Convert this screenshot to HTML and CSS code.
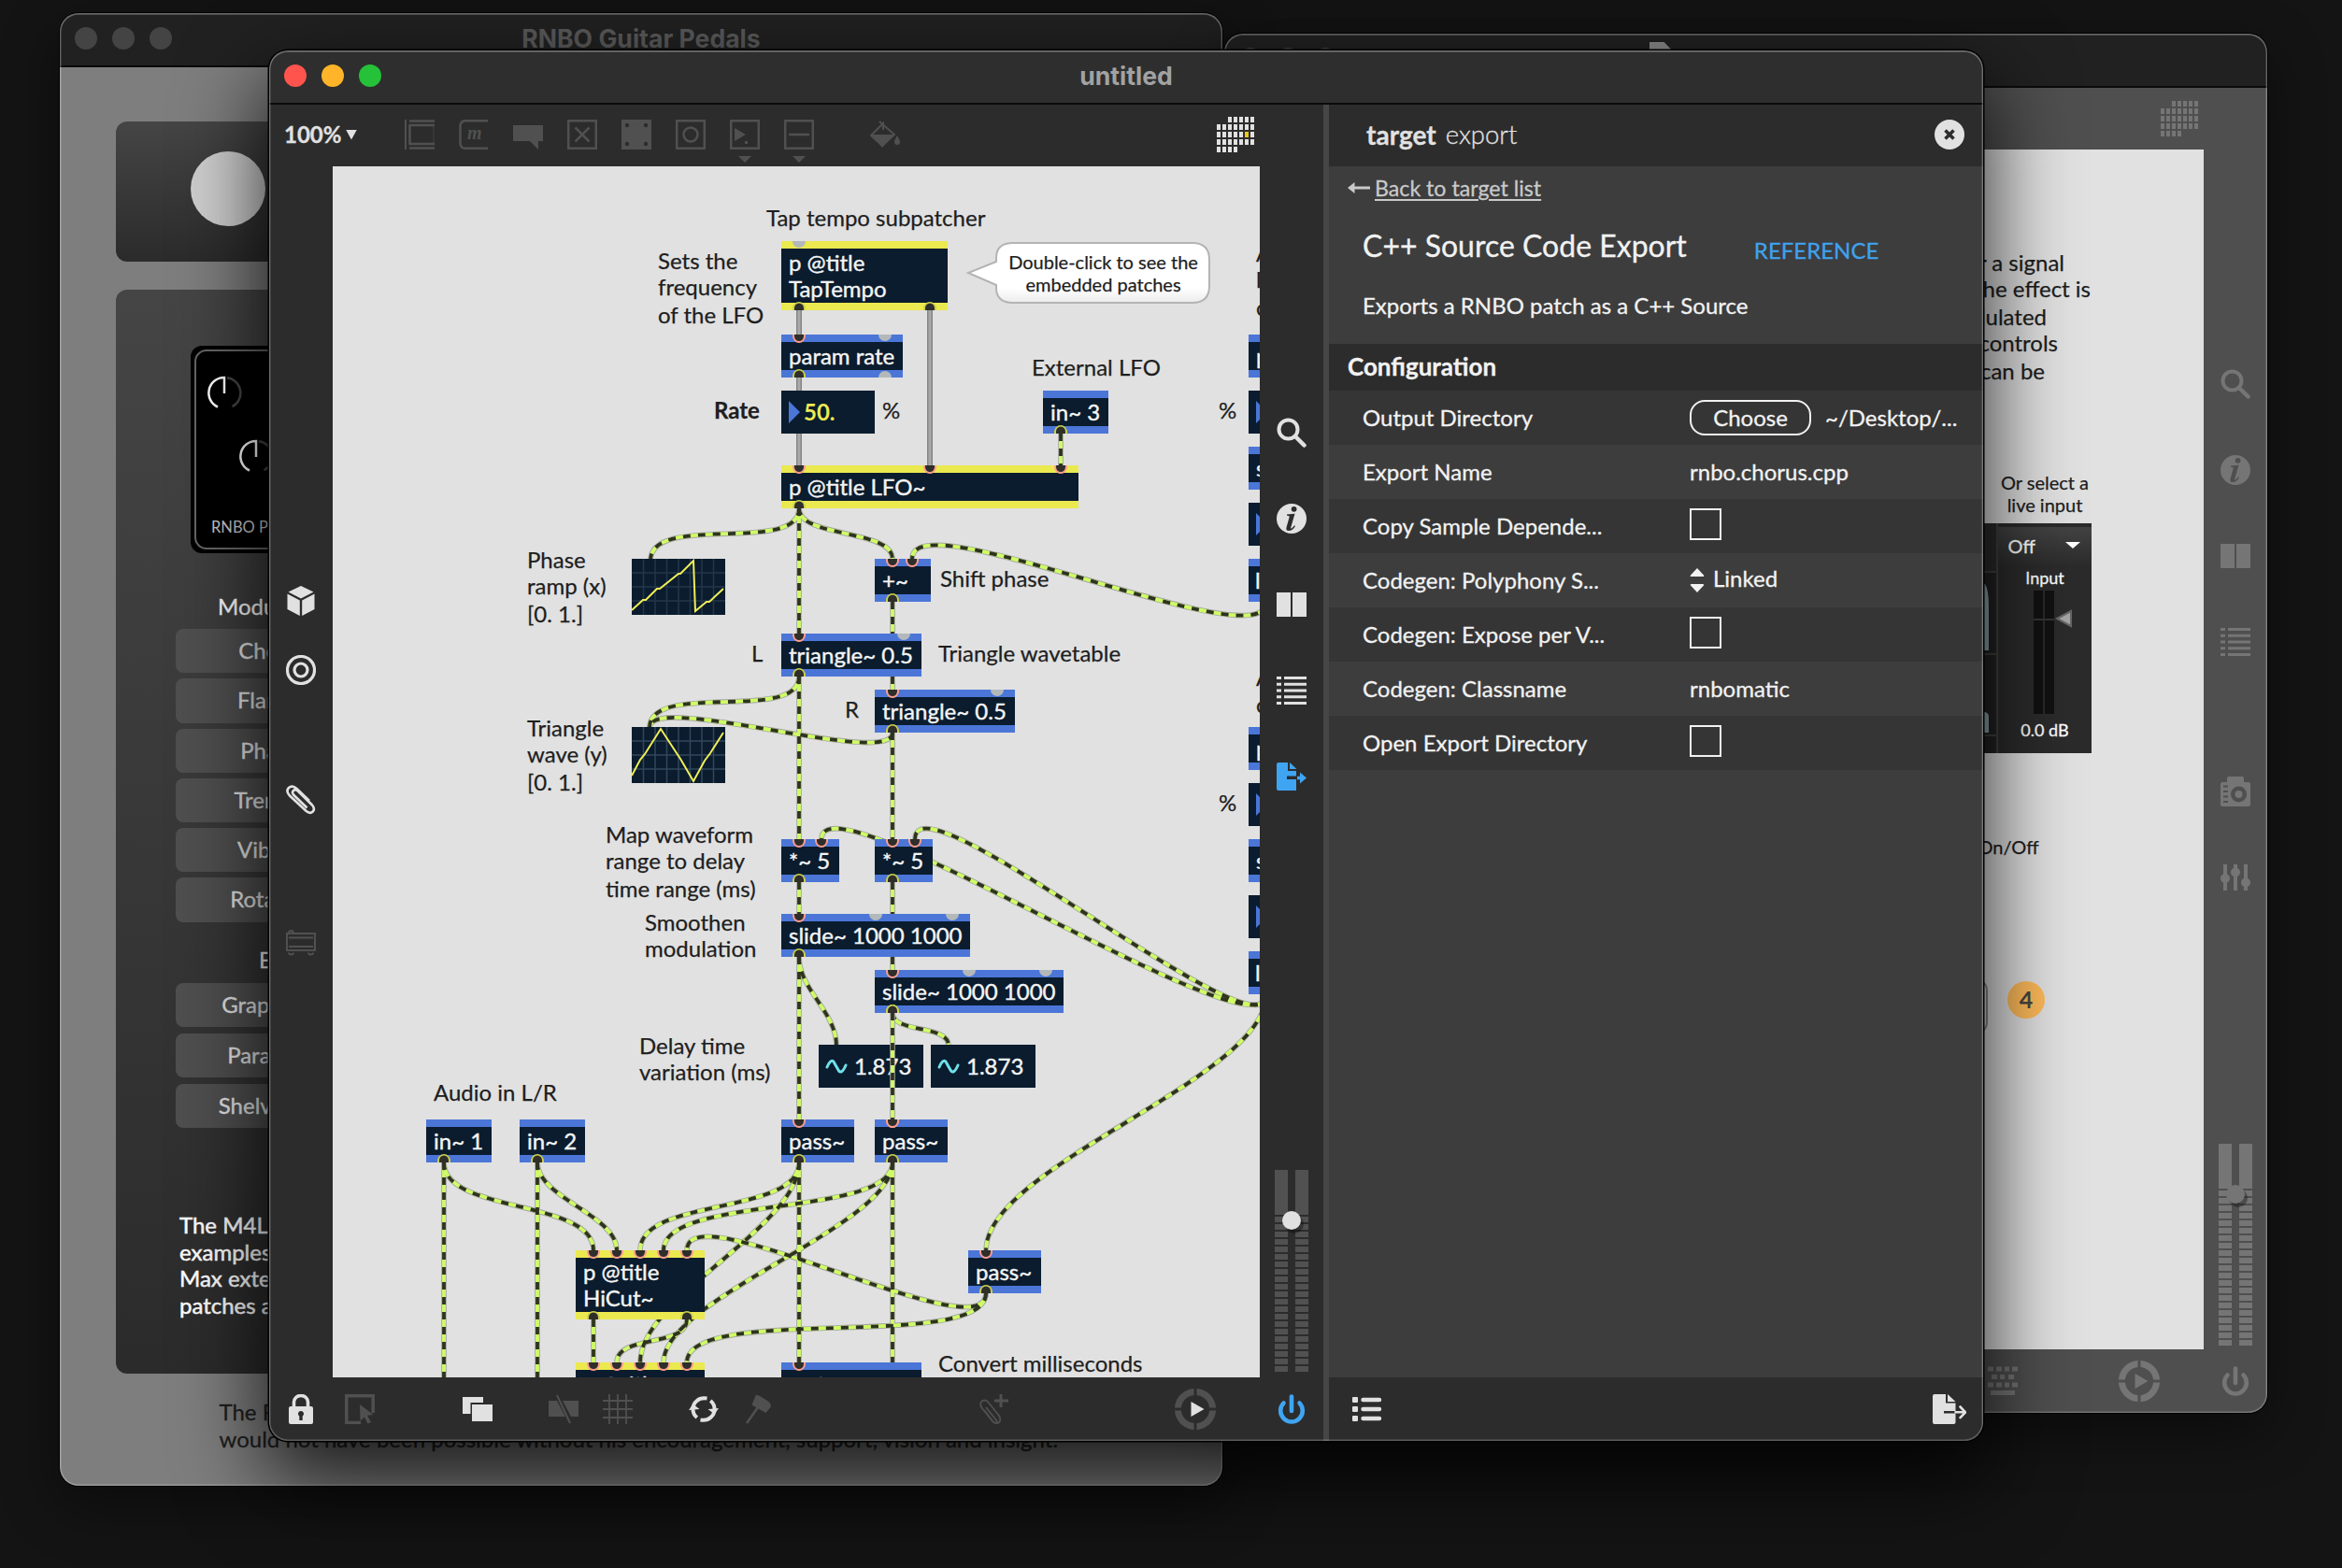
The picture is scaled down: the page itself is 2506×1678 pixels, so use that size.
FILE: index.html
```html
<!DOCTYPE html>
<html lang="en">
<head>
<meta charset="utf-8">
<title>untitled</title>
<link rel="stylesheet" href="styles.css">
</head>
<body>
<svg class="sprite" aria-hidden="true">
  <defs>
    <symbol id="i-search" viewBox="0 0 32 32"><circle cx="12.5" cy="12.5" r="10" fill="none" stroke="currentColor" stroke-width="4"/><path d="M20 20l9.5 9.5" stroke="currentColor" stroke-width="4.5" stroke-linecap="round"/></symbol>
    <symbol id="i-info" viewBox="0 0 32 32"><circle cx="16" cy="16" r="16" fill="currentColor"/><circle class="cut" cx="18.6" cy="5.8" r="2.9"/><path class="cut" d="M11 11.5l8.500-.8-4.200 14.600c-.3 1.100.1 1.500.8 1.100 1-.6 2-1.800 2.900-3.100l1 .7c-1.900 3.200-4.200 5-6.900 5-2.300 0-3.200-1.400-2.600-3.600l3.100-10.800c.3-1.200-.2-1.700-2.600-1.900z"/></symbol>
    <symbol id="i-book" viewBox="0 0 32 32"><path d="M0 3h15v26H0zM17 3h15v26H17z" fill="currentColor"/></symbol>
    <symbol id="i-list" viewBox="0 0 32 32"><path d="M0 2.500h5M8 2.500h24M0 9.200h5M8 9.200h24M0 16h5M8 16h24M0 22.800h5M8 22.800h24M0 29.500h5M8 29.500h24" stroke="currentColor" stroke-width="3" fill="none"/></symbol>
    <symbol id="i-export" viewBox="0 0 32 32"><path d="M2 1h10v9h9v5.500H11v3.500h10V31H2q-2 0-2-2V3q0-2 2-2z" fill="currentColor"/><path d="M14 1l7.500 7H14zM22 15.800h3v-4.300l7 6-7 6v-4.300h-3z" fill="currentColor"/></symbol>
    <symbol id="i-export-open" viewBox="0 0 36 32"><path d="M2 0h12v9.500h10.500V18H12v2.500h12.500V30q0 2-2 2H2q-2 0-2-2V2q0-2 2-2z" fill="currentColor"/><path d="M16 0l8.500 8H16z" fill="currentColor"/><path d="M24.500 19.300H35M29.500 13.500l5.500 5.800-5.500 5.800" fill="none" stroke="currentColor" stroke-width="2.600" stroke-linecap="round"/></symbol>
    <symbol id="i-power" viewBox="0 0 32 32"><path d="M7.500 9.500a11.800 11.800 0 1 0 17 0" fill="none" stroke="currentColor" stroke-width="4.600" stroke-linecap="round"/><path d="M16 2.500v15.500" stroke="currentColor" stroke-width="4.600" stroke-linecap="round"/></symbol>
    <symbol id="i-play" viewBox="0 0 44 44"><circle cx="22" cy="22" r="18.600" fill="none" stroke="currentColor" stroke-width="7"/><path class="cut-line" d="M22-1v11M22 34v11M-1 22h11M34 22h11"/><path class="play-tri" d="M17.500 14l14 8-14 8z"/></symbol>
    <symbol id="i-logo" viewBox="0 0 40 38">
      <path d="M12 3h28M0 11h40M0 19h40M0 27h40M0 35h22" fill="none" stroke="currentColor" stroke-width="6" stroke-dasharray="4 2"/>
      <path class="logo-dot" d="M30 16h4v6h-4z"/>
    </symbol>
    <g id="in"><path class="ring-in" d="M-7 0h14v1.500a7 7.500 0 0 1-14 0z"/><path class="hole" d="M-5 0h10v1.500a5 5.500 0 0 1-10 0z"/></g>
    <g id="out"><path class="ring-out" d="M-7 0h14v-1.500a7 7.500 0 0 0-14 0z"/><path class="hole" d="M-5 0h10v-2a5 5.500 0 0 0-10 0z"/></g>
    <path id="in-off" class="port-off" d="M-7 0h14a7 7 0 0 1-14 0z"/>
    <path id="out-off" class="port-off" d="M-7 0h14a7 7 0 0 0-14 0z"/>
  </defs>
</svg>

<div class="desktop">

  <!-- Guitar pedals overview window -->
  <section class="window win-pedals">
    <header class="titlebar"><span class="light"></span><span class="light"></span><span class="light"></span><h2>RNBO Guitar Pedals</h2></header>
    <div class="pedals-body">
      <div class="card card-head"><span class="disc"></span></div>
      <div class="card card-list">
        <div class="pedal">
          <svg width="200" height="222" viewBox="204 370 200 222">
            <rect x="209" y="375" width="190" height="212" rx="12" class="pedal-edge"/>
            <g class="dial"><path d="M233 435.500a16.500 16.500 0 0 1 7-31.500v17"/><path class="faint" d="M243 404.200a16.500 16.500 0 0 1 5.500 31"/></g>
            <g class="dial" transform="translate(34 68)"><path d="M233 435.500a16.500 16.500 0 0 1 7-31.500v17"/><path class="faint" d="M243 404.200a16.500 16.500 0 0 1 5.500 31"/></g>
            <text x="226" y="570">RNBO PEDALS</text>
          </svg>
        </div>
        <h3 class="group-name mod">Modulation</h3>
        <div class="btns">
          <span class="pbtn">Chorus</span><span class="pbtn">Flanger</span><span class="pbtn">Phaser</span><span class="pbtn">Tremolo</span><span class="pbtn">Vibrato</span><span class="pbtn wide">Rotating</span>
        </div>
        <h3 class="group-name eq">EQ</h3>
        <div class="btns eq-btns">
          <span class="pbtn">Graphic EQ</span><span class="pbtn">Parameter</span><span class="pbtn">Shelving EQ</span>
        </div>
        <p class="note">The M4L<br>examples<br>Max extern<br>patches are</p>
      </div>
      <p class="thanks">The RNBO Guitar Pedals<br>would not have been possible without his encouragement, support, vision and insight.</p>
    </div>
  </section>

  <!-- Chorus help window -->
  <section class="window win-help">
    <header class="titlebar"><span class="light"></span><span class="light"></span><span class="light"></span><i class="doc"></i></header>
    <div class="help-bar"><svg class="logo" width="40" height="38"><use href="#i-logo"/></svg></div>
    <div class="help-mid">
      <svg class="help-canvas" width="980" height="1284" viewBox="1378 160 980 1284">
        <g class="t" text-anchor="end">
          <text x="2209" y="290">for a signal</text><text x="2237" y="318">The effect is</text><text x="2190" y="348">modulated</text><text x="2202" y="376">controls</text><text x="2188" y="406">can be</text>
        </g>
        <g class="t small" text-anchor="middle"><text x="2188" y="524">Or select a</text><text x="2188" y="548">live input</text><text x="2149" y="914">On/Off</text></g>
        <defs><linearGradient id="hd" x2="0" y2="1"><stop stop-color="#434343"/><stop offset="1" stop-color="#2b2b2b"/></linearGradient></defs>
        <rect x="2000" y="560" width="238" height="246" fill="#2b2b2b"/>
        <rect x="2138" y="564" width="100" height="42" fill="url(#hd)"/>
        <rect x="2000" y="612" width="136" height="194" fill="#222"/>
        <path d="M2137 560v246M2000 612h136M2000 700h136M2000 787h136" stroke="#404040" stroke-width="2"/>
        <path d="M2100 696v-71h24q4 6 4 24v47zM2100 784v-22h24q4 1 4 5v17z" fill="#8fa5a9"/>
        <path d="M2210 580h16l-8 7z" fill="#fff"/>
        <path d="M2176 632h10v132h-10zM2188 632h10v132h-10z" fill="#111"/><path d="M2176 663h22" stroke="#333" stroke-width="2"/>
        <path d="M2201 662l15-8v16z" fill="#a5a5a5" stroke="#666" stroke-width="2"/>
        <g class="t tiny"><text x="2148.500" y="592" class="off">Off</text><text x="2188" y="625" text-anchor="middle">Input</text><text x="2188" y="788" text-anchor="middle">0.0 dB</text></g>
        <rect x="2020" y="1048" width="106" height="58" rx="12" fill="#e0e0e0" stroke="#8a8a8a" stroke-width="2"/>
        <circle cx="2168" cy="1070" r="20" fill="#ffbb5a"/>
        <text x="2168" y="1079" text-anchor="middle" class="num4">4</text>
      </svg>
      <aside class="rail rail-help">
        <svg width="32" height="32"><use href="#i-search"/></svg>
        <svg width="32" height="32"><use href="#i-info"/></svg>
        <svg width="32" height="32"><use href="#i-book"/></svg>
        <svg width="32" height="32"><use href="#i-list"/></svg>
        <svg class="camera" width="32" height="32" viewBox="0 0 32 32"><path d="M9 0h14q2 0 2 2v4h5q2 0 2 2v22q0 2-2 2H2q-2 0-2-2V8q0-2 2-2h5V2q0-2 2-2z" fill="currentColor"/><circle class="cut" cx="19.500" cy="19" r="8.500"/><circle cx="19.500" cy="19" r="4" fill="currentColor"/><path class="cut-thin" d="M3 10.500h5M3 16h5M3 21.500h5M3 27h5"/></svg>
        <svg width="32" height="32" viewBox="0 0 32 32"><path d="M5 2v28M16 2v28M27 2v28" stroke="currentColor" stroke-width="4"/><circle cx="5" cy="17" r="5" fill="currentColor"/><circle cx="16" cy="10.500" r="5" fill="currentColor"/><circle cx="27" cy="21.500" r="5" fill="currentColor"/></svg>
        <div class="meter"><i></i><i></i><b></b></div>
      </aside>
    </div>
    <div class="help-foot">
      <svg width="32" height="32" viewBox="0 0 32 32"><path d="M0 3h6M9 3h6M18 3h5M26 3h6M4 11.500h6M13 11.500h5M22 11.500h6M0 20h6M9 20h6M18 20h5M26 20h6M3 28.500h26" stroke="currentColor" stroke-width="5"/></svg>
      <svg class="play" width="44" height="44"><use href="#i-play"/></svg>
      <svg class="pow" width="32" height="32"><use href="#i-power"/></svg>
    </div>
  </section>

  <!-- Active patcher window -->
  <section class="window win-main">
    <header class="titlebar"><span class="light red"></span><span class="light amber"></span><span class="light green"></span><h1>untitled</h1></header>
    <div class="main-body">
      <div class="patcher">
        <div class="toolbar">
          <span class="zoom">100%</span><i class="zoom-arrow"></i>
          <div class="tools">
            <svg width="32" height="32" viewBox="0 0 32 32"><path d="M1 0v32" stroke-width="2"/><path d="M5 1.500h27M5 6h27M5 26h27M5 30.500h27M5.500 5v22" stroke-width="2.500"/><path d="M31 6v20" stroke-width=".6"/></svg>
            <svg width="32" height="32" viewBox="0 0 32 32"><path d="M31 1.200H6q-4 1-4.500 5v20q.5 4 4.500 4.600h25" stroke-width="2.500"/><text x="9" y="21" class="glyph-m">m</text></svg>
            <svg width="32" height="32" viewBox="0 0 32 32"><path d="M0 6h32v17h-5v9l-9-9H0z" class="solid"/></svg>
            <svg width="32" height="32" viewBox="0 0 32 32"><path d="M1.200 1.200h29.600v29.600H1.200z" stroke-width="2.500"/><path d="M8.500 8.500l15 15M23.500 8.500l-15 15" stroke-width="2.500"/></svg>
            <svg width="32" height="32" viewBox="0 0 32 32"><path d="M0 0h32v32H0z" class="solid"/><g class="cut"><circle cx="6" cy="6" r="2.200"/><circle cx="26" cy="6" r="2.200"/><circle cx="6" cy="26" r="2.200"/><circle cx="26" cy="26" r="2.200"/></g></svg>
            <svg width="32" height="32" viewBox="0 0 32 32"><path d="M1.200 1.200h29.600v29.600H1.200z" stroke-width="2.500"/><circle cx="16" cy="16" r="7.500" stroke-width="2.500"/></svg>
            <svg width="32" height="64" viewBox="0 -16 32 64"><path d="M1.200 1.200h29.600v29.600H1.200z" stroke-width="2.500"/><path d="M5 9l12 7-12 7zM16 23h3v3h-3zM9 39h14l-7 7z" class="solid"/></svg>
            <svg width="32" height="64" viewBox="0 -16 32 64"><path d="M1.200 1.200h29.600v29.600H1.200zM5 16h22" stroke-width="2.500"/><path d="M9 39h14l-7 7z" class="solid"/></svg>
            <svg class="bucket" width="32" height="32" viewBox="0 0 32 32"><path d="M10 2l16 14L13 28 1 17 14 4v7" stroke-width="2"/><path d="M1 16h25L13 30z" class="solid"/><path d="M29 17c2 4 3 5 3 7a3 3 0 0 1-6 0c0-2 1-3 3-7z" class="solid"/></svg>
          </div>
          <svg class="logo live" width="40" height="38"><use href="#i-logo"/></svg>
        </div>
        <div class="middle">
          <aside class="rail rail-left">
            <svg width="32" height="32" viewBox="0 0 32 32"><path d="M16 0l13.500 6.500L16 13.500 2.500 6.500zM1.500 8.500l13.300 7V32L1.500 25zM30.500 8.500l-13.300 7V32l13.300-7z" fill="currentColor"/></svg>
            <svg class="target" width="32" height="32" viewBox="0 0 32 32"><circle cx="16" cy="16" r="14.500"/><circle cx="16" cy="16" r="7"/></svg>
            <svg class="clip" width="32" height="32" viewBox="0 0 32 32"><path d="M22.500 24.500L8 10.500q-2-2.500 0-4.500 2.200-1.800 4.500.3L28 21.500q3.500 4 .7 7-3 2.800-7-.5L4 11.500Q-.6 6.500 3 3q3.800-3.300 8.500 1L25 17"/></svg>
            <svg class="amp" width="32" height="32" viewBox="0 0 32 32"><path d="M1 6h30v18H1zM3 10.500h26M3 20h26"/><path d="M3 5.500a2.500 2.500 0 0 1 5 0M3 26.500a2.500 2 0 0 0 5 0M24 26.500a2.500 2 0 0 0 5 0"/></svg>
          </aside>

          <svg class="patch" width="992" height="1296" viewBox="356 178 992 1296">
            <defs>
              <g id="cords">
                <path d="M855 544C855 594 696 548 696 600"/>
                <path d="M855 544V678"/>
                <path d="M855 544C855 576 955 566 955 598"/>
                <path d="M1355 644C1355 709 976 533 976 598"/>
                <path d="M955 644V738"/>
                <path d="M855 724C855 774 695 728 695 779"/>
                <path d="M955 784C955 823 695 739 695 779"/>
                <path d="M855 724V898"/>
                <path d="M955 784V898"/>
                <path d="M855 944V978"/>
                <path d="M955 944V1038"/>
                <path d="M855 1024V1198"/>
                <path d="M855 1024C855 1059 895 1083 895 1119"/>
                <path d="M955 1084C955 1106 1015 1096 1015 1119"/>
                <path d="M1355 1064C1355 1138 879 824 879 898"/>
                <path d="M1355 1064C1355 1138 979 824 979 898"/>
                <path d="M1355 1064C1355 1154 1055 1248 1055 1338"/>
                <path d="M475 1244V1474M575 1244V1474"/>
                <path d="M475 1244C475 1299 635 1283 635 1338"/>
                <path d="M575 1244C575 1282 660 1300 660 1338"/>
                <path d="M855 1244C855 1301 685 1281 685 1338"/>
                <path d="M955 1244C955 1304 710 1278 710 1338"/>
                <path d="M855 1244C855 1314 685 1388 685 1458"/>
                <path d="M955 1244C955 1313 710 1389 710 1458"/>
                <path d="M635 1412V1458"/>
                <path d="M735 1412C735 1442 660 1428 660 1458"/>
                <path d="M855 1244V1458"/>
                <path d="M955 1244V1458"/>
                <path d="M1055 1384C1055 1449 735 1273 735 1338"/>
                <path d="M1055 1384C1055 1448 735 1394 735 1458"/>
                <path d="M1135 464V498"/>
              </g>
              <path id="cord-top" d="M955 1084V1198"/>
              <path id="plain" d="M855 332V358M995 332V498M855 404V418M855 464V498"/>
              <linearGradient id="bub" x2="0" y2="1"><stop offset=".75" stop-color="#fff"/><stop offset="1" stop-color="#ececec"/></linearGradient>
            </defs>
            <use href="#plain" class="plain-edge"/><use href="#plain" class="plain-core"/>
            <use href="#cords" class="cord-edge"/><use href="#cords" class="cord-core"/><use href="#cords" class="cord-dash"/>

            <!-- object bodies -->
            <g class="sub">
              <rect x="836" y="258" width="178" height="74"/><rect x="836" y="498" width="318" height="46"/><rect x="616" y="1338" width="138" height="74"/><rect x="616" y="1458" width="138" height="74"/>
            </g>
            <g class="obj">
              <rect x="836" y="358" width="130" height="46"/><rect x="1116" y="418" width="70" height="46"/><rect x="936" y="598" width="60" height="46"/><rect x="836" y="678" width="150" height="46"/><rect x="936" y="738" width="150" height="46"/><rect x="836" y="898" width="62" height="46"/><rect x="936" y="898" width="62" height="46"/><rect x="836" y="978" width="202" height="46"/><rect x="936" y="1038" width="202" height="46"/><rect x="456" y="1198" width="70" height="46"/><rect x="556" y="1198" width="70" height="46"/><rect x="836" y="1198" width="78" height="46"/><rect x="936" y="1198" width="78" height="46"/><rect x="1036" y="1338" width="78" height="46"/><rect x="836" y="1458" width="150" height="46"/>
              <rect x="1336" y="358" width="90" height="46"/><rect x="1336" y="478" width="90" height="46"/><rect x="1336" y="598" width="90" height="46"/><rect x="1336" y="778" width="90" height="46"/><rect x="1336" y="898" width="90" height="46"/><rect x="1336" y="1018" width="90" height="46"/>
            </g>
            <g class="core">
              <rect x="836" y="266" width="178" height="58"/><rect x="836" y="506" width="318" height="30"/><rect x="616" y="1346" width="138" height="58"/><rect x="616" y="1466" width="138" height="58"/>
              <rect x="836" y="366" width="130" height="30"/><rect x="1116" y="426" width="70" height="30"/><rect x="936" y="606" width="60" height="30"/><rect x="836" y="686" width="150" height="30"/><rect x="936" y="746" width="150" height="30"/><rect x="836" y="906" width="62" height="30"/><rect x="936" y="906" width="62" height="30"/><rect x="836" y="986" width="202" height="30"/><rect x="936" y="1046" width="202" height="30"/><rect x="456" y="1206" width="70" height="30"/><rect x="556" y="1206" width="70" height="30"/><rect x="836" y="1206" width="78" height="30"/><rect x="936" y="1206" width="78" height="30"/><rect x="1036" y="1346" width="78" height="30"/><rect x="836" y="1466" width="150" height="30"/>
              <rect x="1336" y="366" width="90" height="30"/><rect x="1336" y="486" width="90" height="30"/><rect x="1336" y="606" width="90" height="30"/><rect x="1336" y="786" width="90" height="30"/><rect x="1336" y="906" width="90" height="30"/><rect x="1336" y="1026" width="90" height="30"/>
              <rect x="836" y="418" width="100" height="46"/><rect x="876" y="1118" width="112" height="46"/><rect x="996" y="1118" width="112" height="46"/>
              <rect x="1336" y="418" width="90" height="46"/><rect x="1336" y="538" width="90" height="46"/><rect x="1336" y="838" width="90" height="46"/><rect x="1336" y="958" width="90" height="46"/>
              <rect x="676" y="598" width="100" height="60"/><rect x="676" y="778" width="100" height="60"/>
            </g>
            <path class="numtri" d="M844 429v24l12-12zM1344 429v24l12-12zM1344 549v24l12-12zM1344 849v24l12-12zM1344 969v24l12-12z"/>

            <!-- scopes -->
            <path class="grid" d="M688.500 598v60M701 598v60M713.500 598v60M726 598v60M738.500 598v60M751 598v60M763.500 598v60M676 613h100M676 628h100M676 643h100"/>
            <path class="grid bright" d="M688.500 778v60M701 778v60M713.500 778v60M726 778v60M738.500 778v60M751 778v60M763.500 778v60M676 793h100M676 808h100M676 823h100"/>
            <path class="trace" d="M676 653l12-11h3l12-12h3l20-16h2l14-14 2 54 12-10h3l15-14"/>
            <path class="trace" d="M676 830l9-17 5-6 17-27 17 26 4 6 14 24 12-22 6-8 14-22"/>

            <!-- ports -->
            <use href="#in-off" x="855" y="258"/><use href="#in-off" x="947" y="358"/><use href="#out-off" x="947" y="404"/><use href="#in-off" x="967" y="678"/><use href="#in-off" x="1067" y="738"/><use href="#in-off" x="937" y="978"/><use href="#in-off" x="1019" y="978"/><use href="#in-off" x="1037" y="1038"/><use href="#in-off" x="1119" y="1038"/>
            <use href="#in" x="855" y="358"/><use href="#in" x="855" y="498"/><use href="#in" x="995" y="498"/><use href="#in" x="1135" y="498"/><use href="#in" x="955" y="598"/><use href="#in" x="976" y="598"/><use href="#in" x="855" y="678"/><use href="#in" x="955" y="738"/><use href="#in" x="855" y="898"/><use href="#in" x="879" y="898"/><use href="#in" x="955" y="898"/><use href="#in" x="979" y="898"/><use href="#in" x="855" y="978"/><use href="#in" x="955" y="1038"/><use href="#in" x="855" y="1198"/><use href="#in" x="955" y="1198"/><use href="#in" x="1055" y="1338"/><use href="#in" x="855" y="1458"/>
            <use href="#in" x="635" y="1338"/><use href="#in" x="660" y="1338"/><use href="#in" x="685" y="1338"/><use href="#in" x="710" y="1338"/><use href="#in" x="735" y="1338"/>
            <use href="#in" x="635" y="1458"/><use href="#in" x="660" y="1458"/><use href="#in" x="685" y="1458"/><use href="#in" x="710" y="1458"/><use href="#in" x="735" y="1458"/>
            <use href="#out" x="855" y="332"/><use href="#out" x="995" y="332"/><use href="#out" x="855" y="404"/><use href="#out" x="1135" y="464"/><use href="#out" x="855" y="544"/><use href="#out" x="955" y="644"/><use href="#out" x="855" y="724"/><use href="#out" x="955" y="784"/><use href="#out" x="855" y="944"/><use href="#out" x="955" y="944"/><use href="#out" x="855" y="1024"/><use href="#out" x="955" y="1084"/><use href="#out" x="475" y="1244"/><use href="#out" x="575" y="1244"/><use href="#out" x="855" y="1244"/><use href="#out" x="955" y="1244"/><use href="#out" x="1055" y="1384"/><use href="#out" x="635" y="1412"/><use href="#out" x="735" y="1412"/>

            <!-- object text -->
            <g class="t white">
              <text x="844" y="290">p @title</text><text x="844" y="318">TapTempo</text><text x="844" y="390">param rate</text><text x="1124" y="450">in~ 3</text><text x="844" y="530">p @title LFO~</text><text x="944" y="630">+~</text>
              <text x="844" y="710">triangle~ 0.5</text><text x="944" y="770">triangle~ 0.5</text><text x="844" y="930">*~ 5</text><text x="944" y="930">*~ 5</text><text x="844" y="1010">slide~ 1000 1000</text><text x="944" y="1070">slide~ 1000 1000</text>
              <text x="914" y="1150">1.873</text><text x="1034" y="1150">1.873</text><text x="464" y="1230">in~ 1</text><text x="564" y="1230">in~ 2</text><text x="844" y="1230">pass~</text><text x="944" y="1230">pass~</text><text x="1044" y="1370">pass~</text>
              <text x="624" y="1370">p @title</text><text x="624" y="1398">HiCut~</text><text x="624" y="1490">p @title</text><text x="844" y="1490">mstosamps~</text>
              <text x="1344" y="390">p</text><text x="1344" y="510">s</text><text x="1343" y="630">l</text><text x="1344" y="810">p</text><text x="1344" y="930">s</text><text x="1343" y="1050">l</text>
            </g>
            <text x="860" y="450" class="t value">50.</text>
            <path class="sig" d="M885 1142c3-7 6-9 8-4l4 7c2 4 5 2 8-5M1005 1142c3-7 6-9 8-4l4 7c2 4 5 2 8-5"/>
            <use href="#cord-top" class="cord-edge"/><use href="#cord-top" class="cord-core"/><use href="#cord-top" class="cord-dash"/>
            <use href="#in" x="955" y="1198"/><use href="#out" x="955" y="1084"/>

            <!-- comments -->
            <g class="t">
              <text x="820" y="242">Tap tempo subpatcher</text>
              <text x="704" y="288">Sets the</text><text x="704" y="316">frequency</text><text x="704" y="346">of the LFO</text>
              <text x="764" y="448" class="bold">Rate</text><text x="944" y="448">%</text><text x="1304" y="448">%</text><text x="1304" y="868">%</text>
              <text x="1104" y="402">External LFO</text>
              <text x="564" y="608">Phase</text><text x="564" y="636">ramp (x)</text><text x="564" y="666">[0. 1.]</text>
              <text x="1006" y="628">Shift phase</text><text x="804" y="708">L</text><text x="1004" y="708">Triangle wavetable</text><text x="904" y="768">R</text>
              <text x="564" y="788">Triangle</text><text x="564" y="816">wave (y)</text><text x="564" y="846">[0. 1.]</text>
              <text x="648" y="902">Map waveform</text><text x="648" y="930">range to delay</text><text x="648" y="960">time range (ms)</text>
              <text x="690" y="996">Smoothen</text><text x="690" y="1024">modulation</text>
              <text x="684" y="1128">Delay time</text><text x="684" y="1156">variation (ms)</text>
              <text x="464" y="1178">Audio in L/R</text><text x="1004" y="1468">Convert milliseconds</text>
              <text x="1344" y="280">A</text><text x="1344" y="308">l</text><text x="1344" y="338">c</text><text x="1344" y="734">A</text><text x="1344" y="763">c</text>
            </g>
            <path class="bubble" d="M1084 260h192q18 0 18 18v28q0 18-18 18h-192q-18 0-18-16v-3l-30-13 30-12v-4q0-16 18-16z"/>
            <g class="t bub-text" text-anchor="middle"><text x="1180.500" y="288">Double-click to see the</text><text x="1180.500" y="312">embedded patches</text></g>
          </svg>

          <aside class="rail rail-right">
            <svg width="32" height="32"><use href="#i-search"/></svg>
            <svg width="32" height="32"><use href="#i-info"/></svg>
            <svg width="32" height="32"><use href="#i-book"/></svg>
            <svg width="32" height="32"><use href="#i-list"/></svg>
            <svg class="blue" width="32" height="32"><use href="#i-export"/></svg>
            <div class="meter"><i></i><i></i><b></b></div>
          </aside>
        </div>
        <div class="footbar">
          <svg width="32" height="32" viewBox="0 0 32 32"><path d="M3 15q0-2 2-2h22q2 0 2 2v15q0 2-2 2H5q-2 0-2-2z" fill="currentColor"/><path d="M8.500 14V8.500a7.500 7 0 0 1 15 0V14" fill="none" stroke="currentColor" stroke-width="3.600"/><path class="cut" d="M16 18a3 3 0 0 1 1.700 5.500V28h-3.400v-4.500A3 3 0 0 1 16 18z"/></svg>
          <svg class="dim m31" width="32" height="32" viewBox="0 0 32 32"><path d="M17 30.500H1.800V1.800h28.400V20" fill="none" stroke="currentColor" stroke-width="3.500"/><path d="M16 11l14.500 11-6.500.8 4 7.200-3.500 1.500-3.500-7-4.500 4z" fill="currentColor"/></svg>
          <svg class="m94" width="32" height="32" viewBox="0 0 32 32"><path d="M0 3h22v6H8.500v12H0z" fill="currentColor"/><path d="M10 11h22v18H10z" fill="currentColor"/></svg>
          <svg class="dim m60" width="32" height="32" viewBox="0 0 32 32"><path d="M0 7h9l9 17H0zM15 7h17v17h-8z" fill="currentColor"/><path d="M9 1l14 30" stroke="currentColor" stroke-width="2"/></svg>
          <svg class="dim m26" width="32" height="32" viewBox="0 0 32 32"><path d="M7 0v32M16 0v32M25 0v32M0 7h32M0 16h32M0 25h32" stroke="currentColor" stroke-width="1.800"/></svg>
          <svg class="m60" width="32" height="32" viewBox="0 0 32 32"><path d="M8.800 25A11.500 11.500 0 0 1 8.800 7Q12.500 3.500 19.500 4.500M23.200 7A11.500 11.500 0 0 1 23.200 25Q19.500 28.500 12.500 27.500" fill="none" stroke="currentColor" stroke-width="4"/><path d="M32 15l-4.500 6.500-7-5.500zM0 17l4.500-6.500 7 5.500z" fill="currentColor"/></svg>
          <svg class="dim m26" width="32" height="32" viewBox="0 0 32 32"><path d="M14 .5l4 1.500 9 5.500c2 1.500 3.500 5 2.500 6.500l-5 6-15-8.500z" fill="currentColor"/><path d="M16 14L4 31" stroke="currentColor" stroke-width="2.600"/></svg>
          <svg class="dim m220" width="32" height="32" viewBox="0 0 32 32"><path d="M24 0v14M17 7h15" stroke="currentColor" stroke-width="3"/><path d="M8 14l10.500 13q2 2 .5 3.500-2 1-3.500-1L3.500 14.500Q.5 9.500 4 7.200q4-2 7 2L22 23q2.500 4.500.2 7-3.500 3-7.200-1.500L6.500 17.500" fill="none" stroke="currentColor" stroke-width="1.800"/></svg>
          <svg class="dim play m178" width="44" height="44"><use href="#i-play"/></svg>
          <svg class="blue m65" width="32" height="32"><use href="#i-power"/></svg>
        </div>
      </div>

      <div class="inspector">
        <div class="insp-head"><strong>target</strong><span>export</span>
          <svg width="32" height="32" viewBox="0 0 32 32"><circle cx="16" cy="16" r="16" fill="#e1e1e1"/><path d="M11.500 11.500l9 9M20.500 11.500l-9 9" stroke="#2c2c2c" stroke-width="3.600"/></svg>
        </div>
        <div class="insp-intro">
          <a class="back"><svg width="24" height="14" viewBox="0 0 24 14"><path d="M0 7l7.500-6v4.600H24v2.800H7.500V13z" fill="currentColor"/></svg><u>Back to target list</u></a>
          <div class="head-row"><h2>C++ Source Code Export</h2><a>REFERENCE</a></div>
          <p>Exports a RNBO patch as a C++ Source</p>
        </div>
        <h3>Configuration</h3>
        <ul class="rows">
          <li><label>Output Directory</label><button>Choose</button><span>~/Desktop/...</span></li>
          <li><label>Export Name</label><span>rnbo.chorus.cpp</span></li>
          <li><label>Copy Sample Depende...</label><i class="box"></i></li>
          <li><label>Codegen: Polyphony S...</label><svg width="16" height="26" viewBox="0 0 16 26"><path d="M8 0l7 7.500q1 1.500-1 1.500H2Q0 9 1 7.500zM8 26l7-7.500q1-1.500-1-1.500H2q-2 0-1 1.500z" fill="#f2f2f2"/></svg><span class="linked">Linked</span></li>
          <li><label>Codegen: Expose per V...</label><i class="box"></i></li>
          <li><label>Codegen: Classname</label><span>rnbomatic</span></li>
          <li><label>Open Export Directory</label><i class="box"></i></li>
        </ul>
        <div class="insp-foot">
          <svg width="32" height="26" viewBox="0 0 32 26"><path d="M0 1q0-1 1-1h4q1 0 1 1v4q0 1-1 1H1q-1 0-1-1zM0 11q0-1 1-1h4q1 0 1 1v4q0 1-1 1H1q-1 0-1-1zM0 21q0-1 1-1h4q1 0 1 1v4q0 1-1 1H1q-1 0-1-1z" fill="currentColor"/><path d="M11.500 3H29M11.500 13H29M11.500 23H29" stroke="currentColor" stroke-width="4.400" stroke-linecap="round"/></svg>
          <svg width="36" height="32"><use href="#i-export-open"/></svg>
        </div>
      </div>
    </div>
  </section>
</div>
</body>
</html>
```
FILE: styles.css
```css
* { box-sizing: border-box; }
body { margin: 0; background: #141414; }
h1, h2, h3, p, ul { margin: 0; padding: 0; font-weight: inherit; font-size: inherit; }
.sprite { position: absolute; width: 0; height: 0; }
.desktop {
  position: relative; width: 2506px; height: 1678px; overflow: hidden; background: #141414;
  font-family: Lato, "Liberation Sans", sans-serif; font-size: 24px; line-height: 28.8px;
  -webkit-text-stroke: .3px;
}
svg { display: block; flex: none; }

/* windows */
.window {
  position: absolute; display: flex; flex-direction: column; overflow: hidden; border-radius: 20px;
  box-shadow: 0 0 0 1px #000, 0 20px 60px rgba(0,0,0,.45);
}
.window::after {
  content: ""; position: absolute; inset: 0; border-radius: 20px; pointer-events: none;
  box-shadow: inset 0 0 0 1.500px rgba(255,255,255,.22), inset 0 1px 0 1px rgba(255,255,255,.12);
}
.titlebar {
  flex: none; height: 58px; display: flex; align-items: center; gap: 16px; position: relative;
  padding: 0 16px 2px; background: #212121; border-bottom: 2px solid #0a0a0a;
}
.titlebar h1, .titlebar h2 {
  position: absolute; left: 0; right: 0; top: 12px; text-align: center; -webkit-text-stroke: 0;
  font: 700 26.600px/30px Inter, "Liberation Sans", sans-serif;
}
.light { width: 24px; height: 24px; border-radius: 50%; background: #444; }
.red { background: #ff544d; }
.amber { background: #ffb429; }
.green { background: #25c138; }

/* parts of shared icons that show the window behind them */
.cut { fill: var(--win); stroke: none; }
.cut-thin { stroke: var(--win); stroke-width: 2; }
.cut-line { stroke: var(--win); stroke-width: 3; }
.play-tri { fill: var(--tri); }
.logo-dot { fill: var(--dot); }

/* pedals window */
.win-pedals { left: 64px; top: 14px; width: 1244px; height: 1576px; background: #7e7e7e; }
.win-pedals h2 { color: #5a5a5a; }
.pedals-body { padding: 58px 60px 0; }
.card { border-radius: 12px; background: linear-gradient(#454545, #2b2b2b); }
.card-head { height: 150px; padding: 32px 80px; }
.disc { display: block; width: 80px; height: 80px; border-radius: 50%; background: #cfcfcf; }
.card-list { height: 1160px; margin-top: 30px; padding: 60px 64px 0; }
.pedal { width: 200px; height: 222px; margin-left: 16px; border-radius: 12px; background: #000; }
.pedal text { font-size: 16.500px; fill: #ccc; }
.pedal-edge { fill: none; stroke: #666; stroke-width: 2; }
.dial path { fill: none; stroke: #fff; stroke-width: 2.500; }
.dial .faint { stroke: #444; }
.group-name { color: #fff; padding-left: 45px; }
.group-name.mod { margin-top: 43px; height: 38px; }
.group-name.eq { margin-top: 26px; padding-left: 89px; height: 39px; }
.btns { display: flex; flex-direction: column; gap: 6px; width: 210px; }
.pbtn { height: 47.300px; border-radius: 8px; background: #4f4f4f; color: #e6e6e6; text-align: center; line-height: 46px; }
.pbtn.wide { padding-right: 5px; }
.eq-btns { gap: 6.600px; }
.eq-btns .pbtn { padding-left: 9px; }
.note { color: #fff; margin: 90px 0 0 4px; -webkit-text-stroke: .5px; }
.thanks { width: 900px; margin: 27px 0 0 110.500px; color: #1f1f1f; white-space: nowrap; }

/* help window */
.win-help { --win: #4f4f4f; --tri: #757575; --dot: #757575; left: 1310px; top: 36px; width: 1116px; height: 1476px; background: #4f4f4f; color: #757575; }
.doc { width: 26px; height: 36px; margin-left: 319px; background: #8a8a8a; clip-path: polygon(0 0, 60% 0, 100% 30%, 100% 100%, 0 100%); }
.help-bar { height: 66px; flex: none; padding: 14px 74px 0 0; display: flex; justify-content: flex-end; }
.help-mid { display: flex; padding-left: 68px; height: 1284px; }
.help-canvas { background: #e1e1e1; }
.help-foot { flex: 1; display: flex; align-items: center; padding-left: 817px; }
.help-foot .play { margin-left: 108px; }
.help-foot .pow { margin-left: 65px; }
.small { font-size: 20px; }
.tiny { font-size: 18px; }
.t.tiny { fill: #fff; }
.tiny .off { font-size: 20px; }
.num4 { font-size: 25px; font-weight: 700; fill: #4a4540; }

/* rails */
.rail { width: 68px; flex: none; display: flex; flex-direction: column; align-items: center; }
.rail-help { padding: 235px 0 4px; gap: 60px; }
.camera { margin-top: 68px; }
.rail-right { padding: 269px 0 6px; gap: 60px; }
.rail-left { padding-top: 449px; }
.rail-left .target { margin-top: 42px; fill: none; stroke: currentColor; stroke-width: 3.200; }
.rail-left .clip { margin-top: 107px; fill: none; stroke: currentColor; stroke-width: 2.600; }
.rail-left .amp { margin-top: 121px; fill: none; stroke: #505050; stroke-width: 2; }
.meter { position: relative; width: 36px; height: 216px; margin-top: auto; display: flex; justify-content: space-between; }
.meter i {
  width: 14px;
  background:
    linear-gradient(var(--bar), var(--bar)) 0 0 / 100% 48px no-repeat,
    repeating-linear-gradient(transparent 0 2px, var(--bar) 2px 8px) 0 48px / 100% 168px no-repeat;
}
.meter b { position: absolute; left: 8px; top: 44px; width: 20px; height: 20px; border-radius: 50%; background: var(--knob); box-shadow: 3px 4px 1px rgba(0,0,0,.35); }
.win-help .meter { --bar: #757575; --knob: #757575; }
.win-main .meter { --bar: #515151; --knob: #e1e1e1; }

/* patcher window */
.win-main {
  --win: #2c2c2c; --tri: #e1e1e1; --dot: #edc813;
  left: 288px; top: 54px; width: 1834px; height: 1488px; background: #2c2c2c; color: #e1e1e1;
  box-shadow: 0 0 0 1.500px #000, 0 36px 90px 6px rgba(0,0,0,.8);
}
.win-main .titlebar { background: #2e2e2e; }
.win-main h1 { color: #a2a2a2; }
.main-body { display: flex; flex: 1; }
.patcher { width: 1128px; display: flex; flex-direction: column; }
.toolbar { height: 66px; display: flex; align-items: center; padding: 0 74px 2px 16px; }
.zoom { font-weight: 700; width: 66px; }
.zoom-arrow { width: 12px; height: 11px; background: #e1e1e1; clip-path: polygon(0 0, 100% 0, 50% 100%); flex: none; }
.tools { display: flex; align-items: center; gap: 26px; height: 64px; margin-left: 51px; color: #505050; fill: none; stroke: #505050; }
.tools .solid { fill: #505050; stroke: none; }
.tools .bucket { margin-left: 34px; }
.glyph-m { font: italic 700 20px "Liberation Serif", serif; fill: #505050; stroke: none; }
.toolbar .logo { margin-left: auto; }
.middle { display: flex; height: 1296px; }
.blue { color: #3fa5f2; }
.dim { color: #505050; }
.footbar { height: 68px; display: flex; align-items: center; padding-left: 18px; }
.m26 { margin-left: 26px; }
.m31 { margin-left: 31px; }
.m60 { margin-left: 60px; }
.m65 { margin-left: 65px; }
.m94 { margin-left: 94px; }
.m178 { margin-left: 178px; }
.m220 { margin-left: 220px; }

/* patch drawing */
.patch { background: #e1e1e1; }
.patch, .help-canvas, .pedal svg { -webkit-text-stroke: 0; }
.t { fill: #1e1e1e; stroke: #1e1e1e; stroke-width: .25; }
.t.white { fill: #f4f4f4; stroke: #f4f4f4; stroke-width: .4; }
.t.tiny { stroke: #fff; stroke-width: .3; }
.t.value { fill: #ecea52; stroke: none; font-weight: 700; }
.bold { font-weight: 700; }
.t.bub-text { font-size: 20px; }
.sub { fill: #ebe950; }
.obj { fill: #4b76d8; }
.core { fill: #0a1c2e; }
.numtri { fill: #4b76d8; }
.grid { fill: none; stroke: #243649; stroke-width: 1.500; }
.grid.bright { stroke: #33475c; }
.trace { fill: none; stroke: #f0ee58; stroke-width: 2; }
.sig { fill: none; stroke: #6fe0ea; stroke-width: 3; stroke-linecap: round; }
.ring-in { fill: #ff9d8e; }
.ring-out { fill: #cdd04a; }
.hole { fill: #2e2e2a; }
.port-off { fill: #b3b8bb; }
.plain-edge { fill: none; stroke: #858585; stroke-width: 6; }
.plain-core { fill: none; stroke: #a9a9a9; stroke-width: 3; }
.cord-edge { fill: none; stroke: #a5a5a0; stroke-width: 5.600; }
.cord-core { fill: none; stroke: #cffc66; stroke-width: 3.800; }
.cord-dash { fill: none; stroke: #2e3320; stroke-width: 3.800; stroke-dasharray: 8 8; }
.bubble { fill: url(#bub); stroke: #b4b4b4; stroke-width: 2; }

/* export inspector */
.inspector { flex: 1; display: flex; flex-direction: column; background: #3d3d3d; border-left: 6px solid #464646; color: #f2f2f2; }
.insp-head { height: 66px; display: flex; align-items: center; padding: 0 20px 2px 40px; background: #2c2c2c; color: #e1e1e1; font-size: 27.500px; }
.insp-head strong { font-size: 28px; }
.insp-head span { margin-left: 10px; font-weight: 300; }
.insp-head svg { margin-left: auto; }
.insp-intro { height: 190px; padding: 9px 0 0 36px; }
.back { display: flex; align-items: center; gap: 5px; margin-left: -16px; color: #c9c9c9; font-size: 23.200px; }
.back u { text-underline-offset: 3px; text-decoration-thickness: 2px; }
.head-row { display: flex; align-items: baseline; gap: 72px; margin-top: 27px; height: 40px; line-height: 40px; }
.head-row h2 { font-size: 32px; }
.head-row a { color: #3fa2ee; position: relative; top: 2px; }
.insp-intro p { margin-top: 30px; }
.inspector h3 { height: 50px; line-height: 48px; padding-left: 20px; background: #2c2c2c; font-weight: 700; font-size: 26px; }
.rows { list-style: none; }
.rows li { height: 58px; display: flex; align-items: center; padding-left: 36px; }
.rows li:nth-child(odd) { background: #353535; }
.rows label { width: 350px; }
.rows button { width: 130px; height: 38px; border: 2px solid #f2f2f2; border-radius: 16px; background: none; color: inherit; font: inherit; padding: 0; margin-right: 15px; }
.box { width: 34px; height: 34px; border: 2px solid #f2f2f2; margin-bottom: 4px; }
.linked { margin: 0 0 4px 9px; }
.insp-foot { margin-top: auto; height: 68px; display: flex; align-items: center; justify-content: space-between; padding: 0 18px 0 25px; background: #2c2c2c; color: #e1e1e1; }
```
